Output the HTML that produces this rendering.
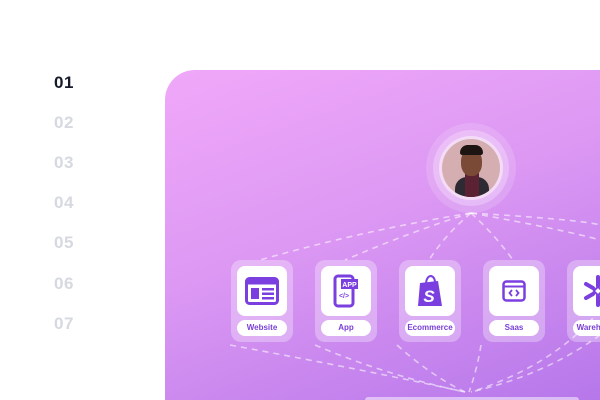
<!DOCTYPE html>
<html style="overflow:hidden;width:600px;height:400px"><head><style>
body{margin:0;width:600px;height:400px;overflow:hidden;background:#fff;font-family:"Liberation Sans",sans-serif;position:relative}
.n{position:absolute;left:54px;font-weight:700;font-size:17px;color:#d6d9e0;letter-spacing:0.5px}
.card{position:absolute;left:165px;top:70px;width:435px;height:330px;border-radius:30px 0 0 0;background:linear-gradient(160deg,#f0a8f9 0%,#dc98f3 45%,#b677ea 100%);overflow:hidden}
.tile{position:absolute;top:190px;width:62px;height:82px;border-radius:10px;background:rgba(255,255,255,0.3)}
.sq{position:absolute;left:6px;top:6px;width:50px;height:50px;border-radius:8px;background:#fff;display:flex;align-items:center;justify-content:center}
.lb{position:absolute;left:6px;top:60px;width:50px;height:16px;border-radius:8px;background:#fff;font-size:8px;font-weight:700;color:#7a3ed6;text-align:center;line-height:16px;white-space:nowrap;overflow:hidden}
</style></head><body>
<div class="n" style="top:73px;color:#161a2b">01</div>
<div class="n" style="top:113px">02</div>
<div class="n" style="top:153px">03</div>
<div class="n" style="top:193px">04</div>
<div class="n" style="top:233px">05</div>
<div class="n" style="top:274px">06</div>
<div class="n" style="top:314px">07</div>
<div class="card">
<svg width="435" height="330" style="position:absolute;left:0;top:0" fill="none" stroke="rgba(255,255,255,0.55)" stroke-width="1.6" stroke-dasharray="6 5">
<path d="M306 143 Q200 160 95 190"/><path d="M306 143 Q250 160 180 190"/><path d="M306 143 Q280 165 264 190"/><path d="M306 143 Q330 165 348 190"/><path d="M306 143 Q400 160 435 170"/><path d="M306 143 Q420 150 435 155"/>
<path d="M65 275 Q200 300 300 322"/><path d="M150 275 Q220 305 300 322"/><path d="M232 275 Q265 305 300 322"/><path d="M316 275 Q312 300 304 322"/><path d="M435 265 Q380 305 306 322"/><path d="M435 240 Q390 295 306 322"/>
</svg>
<div style="position:absolute;left:261px;top:53px;width:90px;height:90px;border-radius:50%;background:rgba(255,255,255,0.15)"></div>
<div style="position:absolute;left:268px;top:60px;width:76px;height:76px;border-radius:50%;background:rgba(255,255,255,0.25)"></div>
<div style="position:absolute;left:274px;top:66px;width:64px;height:64px;border-radius:50%;background:#f4dcf7"></div>
<div style="position:absolute;left:277px;top:69px;width:58px;height:58px;border-radius:50%;background:#d4aeb0;overflow:hidden">
<div style="position:absolute;left:13px;top:38px;width:34px;height:20px;border-radius:12px 12px 0 0;background:#2d2a33"></div>
<div style="position:absolute;left:23px;top:34px;width:14px;height:24px;background:#5a2233"></div>
<div style="position:absolute;left:19px;top:10px;width:21px;height:27px;border-radius:45%;background:#7a4a36"></div>
<div style="position:absolute;left:18px;top:6px;width:23px;height:10px;border-radius:10px 10px 3px 3px;background:#1e1512"></div>
</div>
<div class="tile" style="left:66px"><div class="sq"><svg width="34" height="28" viewBox="0 0 34 28"><rect x="1.5" y="1.5" width="31" height="25" rx="3" fill="none" stroke="#7b3fe0" stroke-width="3"/><rect x="1.5" y="1.5" width="31" height="6" fill="#7b3fe0"/><rect x="6" y="11" width="8" height="11" fill="#7b3fe0"/><rect x="17" y="11" width="12" height="2.5" fill="#7b3fe0"/><rect x="17" y="15.5" width="12" height="2.5" fill="#7b3fe0"/><rect x="17" y="20" width="12" height="2.5" fill="#7b3fe0"/></svg></div><div class="lb">Website</div></div>
<div class="tile" style="left:150px"><div class="sq"><svg width="26" height="34" viewBox="0 0 26 34"><rect x="2" y="2" width="18" height="30" rx="3" fill="none" stroke="#7b3fe0" stroke-width="3"/><rect x="8" y="5" width="17" height="10" fill="#7b3fe0"/><text x="16.5" y="13" font-size="7" font-weight="700" fill="#fff" text-anchor="middle" font-family="Liberation Sans">APP</text><text x="11" y="24" font-size="7" font-weight="700" fill="#7b3fe0" text-anchor="middle" font-family="Liberation Sans">&lt;/&gt;</text></svg></div><div class="lb">App</div></div>
<div class="tile" style="left:234px"><div class="sq"><svg width="28" height="34" viewBox="0 0 28 34"><path d="M4 9 L22 7 L26 32 L2 32 Z" fill="#7b3fe0"/><path d="M10 9 Q11 2 15 2 Q19 3 19 9" fill="none" stroke="#7b3fe0" stroke-width="2"/><text x="13" y="28" font-size="17" font-weight="700" font-style="italic" fill="#fff" text-anchor="middle" font-family="Liberation Sans">S</text></svg></div><div class="lb">Ecommerce</div></div>
<div class="tile" style="left:318px"><div class="sq"><svg width="24" height="22" viewBox="0 0 24 22"><rect x="1.5" y="1.5" width="21" height="19" rx="3" fill="none" stroke="#7b3fe0" stroke-width="2.5"/><line x1="1.5" y1="6.5" x2="22.5" y2="6.5" stroke="#7b3fe0" stroke-width="2"/><path d="M10 10 L7.5 13 L10 16 M14 10 L16.5 13 L14 16" fill="none" stroke="#7b3fe0" stroke-width="1.8"/></svg></div><div class="lb">Saas</div></div>
<div class="tile" style="left:402px"><div class="sq"><svg width="34" height="34" viewBox="0 0 34 34" stroke="#7b3fe0" stroke-width="4" stroke-linecap="round"><path d="M17 3 V12 M17 22 V31 M5 10 L12 14 M22 20 L29 24 M5 24 L12 20 M22 14 L29 10"/><rect x="14" y="14" width="6" height="6" fill="none" stroke-width="2" transform="rotate(45 17 17)"/></svg></div><div class="lb">Warehouse</div></div>
<div style="position:absolute;left:200px;top:327px;width:214px;height:3px;border-radius:10px 10px 0 0;background:rgba(255,255,255,0.5)"></div>
</div>
</body></html>
